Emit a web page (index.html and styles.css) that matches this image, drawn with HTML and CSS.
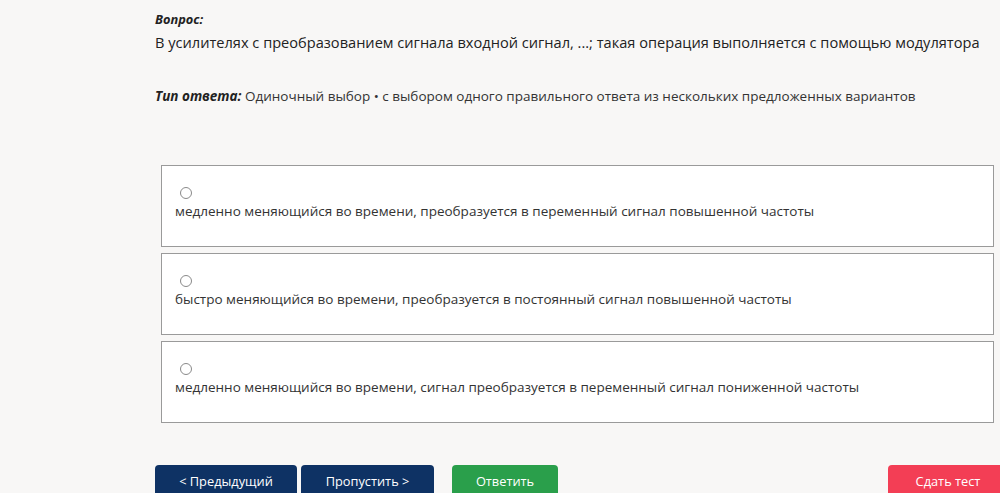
FILE: index.html
```html
<!DOCTYPE html>
<html lang="ru">
<head>
<meta charset="utf-8">
<link rel="stylesheet" href="styles.css">
</head>
<body>
<div class="page">
  <div class="q-label">Вопрос:</div>
  <div class="q-text">В усилителях с преобразованием сигнала входной сигнал, ...; такая операция выполняется с помощью модулятора</div>
  <div class="q-type"><span class="q-type-label">Тип ответа:</span> Одиночный выбор • с выбором одного правильного ответа из нескольких предложенных вариантов</div>

  <div class="options">
    <label class="option">
      <input type="radio" name="ans" class="radio">
      <span class="option-text">медленно меняющийся во времени, преобразуется в переменный сигнал повышенной частоты</span>
    </label>
    <label class="option">
      <input type="radio" name="ans" class="radio">
      <span class="option-text">быстро меняющийся во времени, преобразуется в постоянный сигнал повышенной частоты</span>
    </label>
    <label class="option">
      <input type="radio" name="ans" class="radio">
      <span class="option-text">медленно меняющийся во времени, сигнал преобразуется в переменный сигнал пониженной частоты</span>
    </label>
  </div>

  <div class="actions">
    <button class="btn btn-navy btn-prev">&lt; Предыдущий</button>
    <button class="btn btn-navy btn-skip">Пропустить &gt;</button>
    <button class="btn btn-green btn-answer">Ответить</button>
    <span class="spacer"></span>
    <button class="btn btn-red btn-finish">Сдать тест</button>
  </div>
</div>
</body>
</html>
```

FILE: styles.css
```css
html, body {
  margin: 0;
  padding: 0;
  background: #f8f7f6;
  overflow: hidden;
}
body {
  font-family: "Open Sans", "Noto Sans", "Liberation Sans", sans-serif;
  color: #222;
}
.page {
  padding: 11px 0 0 155px;
}
.q-label {
  font-size: 12.8px;
  font-weight: 700;
  font-style: italic;
  line-height: 17px;
  color: #222;
}
.q-text {
  font-size: 14.6px;
  line-height: 20px;
  margin-top: 4px;
  color: #222;
  white-space: nowrap;
}
.q-type {
  font-size: 13.5px;
  line-height: 18px;
  margin-top: 35px;
  color: #333;
  white-space: nowrap;
}
.q-type-label {
  font-weight: 700;
  font-style: italic;
  color: #222;
}
.options {
  margin: 60px 0 0 6px;
  width: 833px;
  display: flex;
  flex-direction: column;
  gap: 6px;
}
.option {
  display: flex;
  flex-direction: column;
  align-items: flex-start;
  height: 82px;
  box-sizing: border-box;
  border: 1px solid #9a9a9a;
  background: #fff;
  padding: 19px 13px 0 13px;
}
.radio {
  margin: 2px 0 0 5px;
  width: 12px;
  height: 12px;
  appearance: none;
  -webkit-appearance: none;
  border: 1px solid #8a8a8a;
  border-radius: 50%;
  background: #fff;
}
.option-text {
  font-size: 13.5px;
  line-height: 18px;
  margin-top: 3px;
  color: #333;
  white-space: nowrap;
}
.actions {
  display: flex;
  margin-top: 42px;
  align-items: flex-start;
}
.btn {
  border: 0;
  height: 34px;
  border-radius: 4px;
  color: #fff;
  font-family: "Open Sans", "Noto Sans", "Liberation Sans", sans-serif;
  font-size: 12.8px;
  padding: 0 0 2px 0;
}
.btn-navy { background: #0e3264; }
.btn-green { background: #2a9f4b; }
.btn-red { background: #f33e55; }
.btn-prev { width: 142px; }
.btn-skip { width: 133px; margin-left: 4px; }
.btn-answer { width: 106px; margin-left: 18px; }
.spacer { flex: 1; }
.btn-finish { width: 120px; margin-right: -8px; }
```
